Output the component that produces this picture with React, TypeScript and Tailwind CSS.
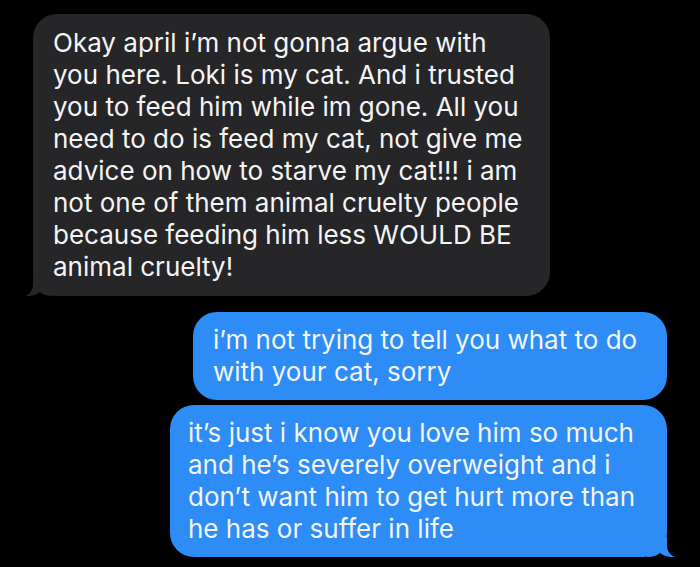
import React from 'react';

const grayLines = [
  'Okay april i’m not gonna argue with',
  'you here. Loki is my cat. And i trusted',
  'you to feed him while im gone. All you',
  'need to do is feed my cat, not give me',
  'advice on how to starve my cat!!! i am',
  'not one of them animal cruelty people',
  'because feeding him less WOULD BE',
  'animal cruelty!',
];

const blueOne = ['i’m not trying to tell you what to do', 'with your cat, sorry'];

const blueTwo = [
  'it’s just i know you love him so much',
  'and he’s severely overweight and i',
  'don’t want him to get hurt more than',
  'he has or suffer in life',
];

function Tail({ color, flip }: { color: string; flip?: boolean }) {
  return (
    <svg
      width="30"
      height="20"
      viewBox="0 0 30 20"
      className={
        flip
          ? 'absolute -right-[8px] bottom-0 -scale-x-100'
          : 'absolute -left-[8px] bottom-0'
      }
    >
      <path
        d="M8 0 L8 8 C8 14 5 18 0 20 C6 20.5 11 19 15 16 C18 18.5 22 20 28 20 L28 0 Z"
        fill={color}
      />
    </svg>
  );
}

function Lines({ lines }: { lines: string[] }) {
  return (
    <>
      {lines.map((l) => (
        <span key={l} className="block whitespace-nowrap">
          {l}
        </span>
      ))}
    </>
  );
}

export default function App() {
  return (
    <div
      className="flex h-[567px] w-[700px] flex-col bg-black pt-[14px] text-[26px] leading-[32px] text-[#f4f4f4]"
      style={{ fontFamily: 'Inter, "Liberation Sans", sans-serif' }}
    >
      <div className="relative ml-[33px] w-[517px] rounded-[24px] bg-[#262628] py-[13px] pl-[20px]">
        <Lines lines={grayLines} />
        <Tail color="#262628" />
      </div>

      <div className="mr-[33px] mt-[16px] flex flex-col items-end gap-[5px]">
        <div className="w-[474px] rounded-[24px] bg-[#2d8cf5] py-[12px] pl-[20px]">
          <Lines lines={blueOne} />
        </div>
        <div className="relative w-[497px] rounded-[24px] bg-[#2d8cf5] py-[12px] pl-[18px]">
          <Lines lines={blueTwo} />
          <Tail color="#2d8cf5" flip />
        </div>
      </div>
    </div>
  );
}
